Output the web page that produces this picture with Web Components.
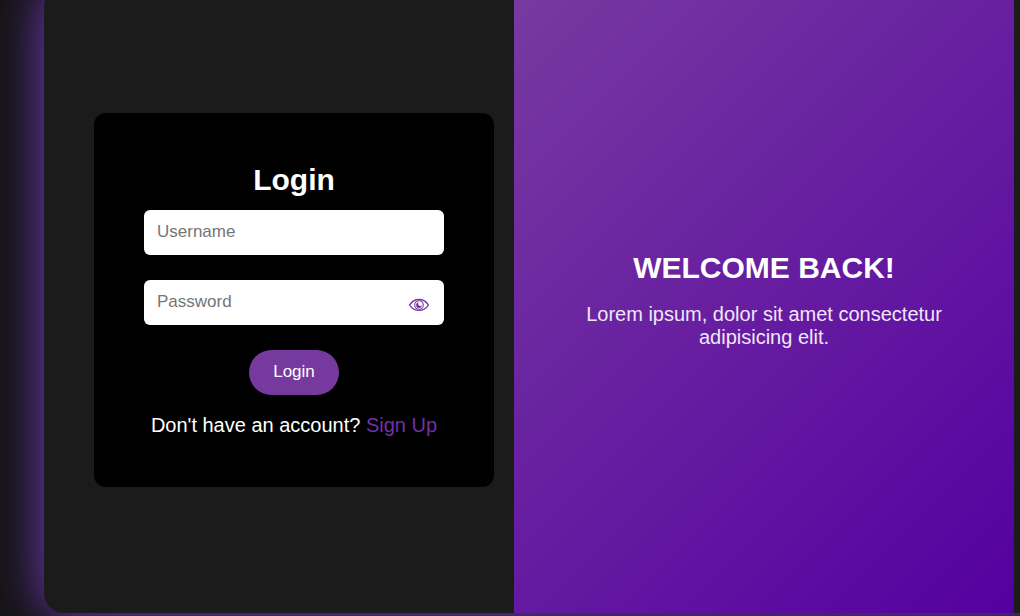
<!DOCTYPE html>
<html lang="en">
<head>
<meta charset="utf-8">
<meta name="viewport" content="width=device-width, initial-scale=1">
<title>Login</title>
<style>
body{margin:0;min-height:100vh;background:#141414;color:#fff;font:20px/23px "Liberation Sans",Arial,sans-serif;overflow:hidden}
</style>
</head>
<body>
<auth-card>
  <login-form></login-form>
  <welcome-panel slot="aside" heading="WELCOME BACK!">Lorem ipsum, dolor sit amet consectetur adipisicing elit.</welcome-panel>
</auth-card>
<script>
class AuthCard extends HTMLElement{
  constructor(){
    super();
    this.attachShadow({mode:"open"}).innerHTML=`
    <style>
    :host{display:grid;grid-template-columns:47fr 50fr;box-sizing:border-box;min-height:calc(100vh + 10px);
      margin:-13px -20px 0 44px;padding-right:26px;border-radius:20px;background:#1b1b1b;box-shadow:0 0 50px 1px #743bc0}
    main{display:flex;align-items:center;padding:0 20px 0 50px}
    ::slotted(*){flex:1}
    </style>
    <main><slot></slot></main>
    <slot name="aside"></slot>`;
  }
}
class TextField extends HTMLElement{
  constructor(){
    super();
    const type=this.getAttribute("type")||"text",label=this.getAttribute("label");
    this.attachShadow({mode:"open"}).innerHTML=`
    <style>
    :host{display:flex;align-items:center;height:45px;box-sizing:border-box;padding:0 14px 0 13px;border-radius:6px;background:#fff}
    input{flex:1;min-width:0;height:100%;box-sizing:border-box;border:0;outline:0;padding:0 0 2px;background:none;color:#222;font:17px/20px "Liberation Sans",Arial,sans-serif}
    input::placeholder{color:#757575;opacity:1}
    </style>
    <input type="${type}" placeholder="${label}" aria-label="${label}"><slot></slot>`;
  }
}
class RevealButton extends HTMLElement{
  constructor(){
    super();
    this.attachShadow({mode:"open"}).innerHTML=`
    <style>
    :host{display:block;padding-top:4px}
    button{display:block;padding:0;border:0;background:none;color:#763a9f;cursor:pointer}
    svg{display:block}
    </style>
    <button type="button" aria-label="Show password">
    <svg width="22" height="16" viewBox="0 0 22 16" fill="none" stroke="currentColor">
      <path stroke-width="1.4" d="M1.6 8C4 4.100 7 2.500 11 2.500S18 4.100 20.400 8C18 11.900 15 13.400 11 13.400S4 11.900 1.600 8Z"/>
      <circle cx="11" cy="8" r="4.300" stroke-width="1.100"/>
      <path fill="currentColor" stroke="none" d="M10.800 5.200A2.900 2.900 0 1 0 13.900 8.300A2 2 0 0 1 10.800 5.200Z"/>
    </svg></button>`;
    this.shadowRoot.querySelector("button").addEventListener("click",()=>{
      const input=this.parentElement.shadowRoot.querySelector("input");
      input.type=input.type==="password"?"text":"password";
    });
  }
}
class LoginForm extends HTMLElement{
  constructor(){
    super();
    this.attachShadow({mode:"open"}).innerHTML=`
    <style>
    :host{display:block;padding:50px;border-radius:12px;background:#000;text-align:center}
    h1{margin:0 0 13px;font-size:30px;line-height:34px}
    form{display:flex;flex-direction:column;gap:25px}
    text-field{text-align:left}
    .submit{align-self:center;height:45px;padding:0 24px 2px;border:0;border-radius:23px;background:#763a9f;color:#fff;font:17px/20px "Liberation Sans",Arial,sans-serif;cursor:pointer}
    p{margin:19px -20px 0}
    a{color:#7030a8;text-decoration:none}
    </style>
    <h1>Login</h1>
    <form>
      <text-field label="Username"></text-field>
      <text-field label="Password" type="password"><reveal-button></reveal-button></text-field>
      <button class="submit" type="button">Login</button>
    </form>
    <p>Don't have an account? <a href="#signup">Sign Up</a></p>`;
  }
}
class WelcomePanel extends HTMLElement{
  constructor(){
    super();
    this.attachShadow({mode:"open"}).innerHTML=`
    <style>
    :host{display:flex;flex-direction:column;justify-content:center;padding:0 50px;background:linear-gradient(135deg,#783aa0,#5400a0);text-align:center}
    h2{margin:0 0 18px;font-size:30px;line-height:34px}
    p{margin:0;color:#f0e6f8}
    </style>
    <h2></h2><p><slot></slot></p>`;
    this.shadowRoot.querySelector("h2").textContent=this.getAttribute("heading");
  }
}
customElements.define("auth-card",AuthCard);
customElements.define("reveal-button",RevealButton);
customElements.define("text-field",TextField);
customElements.define("login-form",LoginForm);
customElements.define("welcome-panel",WelcomePanel);
</script>
</body>
</html>
